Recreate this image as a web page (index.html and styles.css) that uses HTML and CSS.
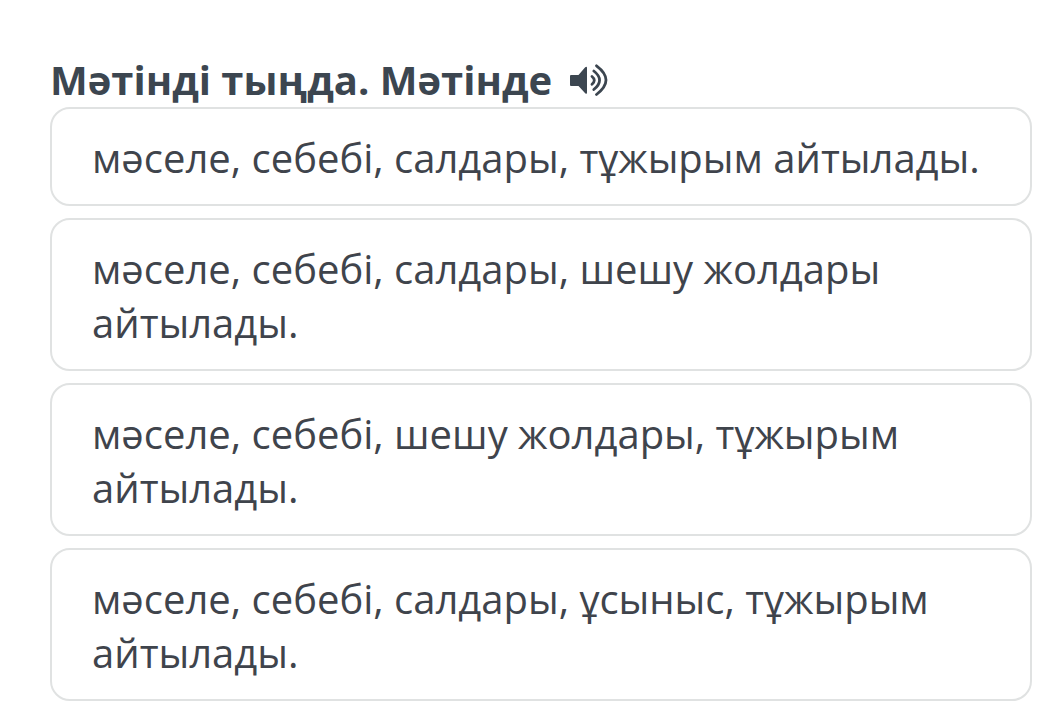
FILE: index.html
```html
<!DOCTYPE html>
<html lang="kk">
<head>
<meta charset="utf-8">
<meta name="viewport" content="width=device-width, initial-scale=1">
<title>Тапсырма</title>
<link rel="stylesheet" href="styles.css">
</head>
<body>
<main class="quiz">
  <header class="question">
    <h1 class="question-text">Мәтінді тыңда. Мәтінде</h1>
    <button class="listen" type="button" aria-label="Тыңдау">
      <svg class="listen-icon" viewBox="0 0 38 32" aria-hidden="true">
        <path fill="currentColor" d="M1 11h7.500L15.200 3.300Q17 1.800 17 4v24.500q0 2.200-1.800.7L8.500 22H1Q0 22 0 21v-9q0-1 1-1z"/>
        <g fill="none" stroke="currentColor" stroke-width="2.800" stroke-linecap="round">
          <path d="M22 12.500q4.600 3.700 0 7.800"/>
          <path d="M23.800 7q11.500 9 0 18.500"/>
          <path d="M26.500 1.800q19 14.200 0 28.700"/>
        </g>
      </svg>
    </button>
  </header>
  <div class="answers">
    <button class="answer" type="button">мәселе, себебі, салдары, тұжырым айтылады.</button>
    <button class="answer" type="button">мәселе, себебі, салдары, шешу жолдары айтылады.</button>
    <button class="answer" type="button">мәселе, себебі, шешу жолдары, тұжырым айтылады.</button>
    <button class="answer" type="button">мәселе, себебі, салдары, ұсыныс, тұжырым айтылады.</button>
  </div>
</main>
</body>
</html>
```

FILE: styles.css
```css
* {
  box-sizing: border-box;
}

body {
  margin: 0;
  background: #fff;
  color: #3f444c;
  font-family: "Open Sans", "Noto Sans", sans-serif;
}

.quiz {
  padding: 53px 24px 24px 50px;
}

.question {
  display: flex;
  align-items: center;
  gap: 18px;
  color: #3c4650;
}

.question-text {
  margin: 0;
  font-size: 40px;
  font-weight: 700;
  line-height: 54px;
}

.listen {
  display: flex;
  padding: 0;
  border: 0;
  background: none;
  color: inherit;
}

.listen-icon {
  width: 38px;
  height: 32px;
}

.answers {
  display: flex;
  flex-direction: column;
  gap: 12px;
}

.answer {
  padding: 22px 40px 19px;
  border: 2px solid #e0e2e2;
  border-radius: 20px;
  background: #fff;
  color: inherit;
  font-family: inherit;
  font-size: 40px;
  line-height: 54px;
  text-align: left;
}
```
